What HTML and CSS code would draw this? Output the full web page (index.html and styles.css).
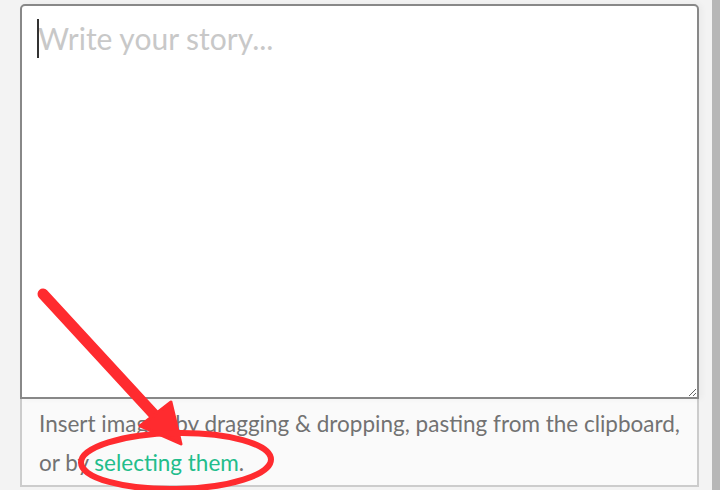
FILE: index.html
```html
<!DOCTYPE html>
<html lang="en">
<head>
    <meta charset="UTF-8">
    <title>Write your story</title>
    <link rel="stylesheet" href="styles.css">
</head>
<body>
    <div class="page">
        <div class="editor">
            <div class="field">
                <textarea class="story" placeholder="Write your story..."></textarea>
                <span class="caret"></span>
            </div>
            <div class="upload-hint">
                Insert images by dragging &amp; dropping, pasting from the clipboard, or by <a href="#" class="select-link">selecting them</a>.
            </div>
        </div>
        <div class="scroll-track"></div>
    </div>

    <svg class="annotation" width="720" height="490" viewBox="0 0 720 490">
        <line x1="43" y1="294" x2="160" y2="421" stroke="#ff2b2f" stroke-width="11" stroke-linecap="round"/>
        <polygon points="181,444 140,426 171,402" fill="#ff2b2f" stroke="#ff2b2f" stroke-width="3" stroke-linejoin="round"/>
        <ellipse cx="176" cy="461" rx="95" ry="28" fill="none" stroke="#ff2b2f" stroke-width="6" transform="rotate(-1 176 461)"/>
    </svg>
</body>
</html>
```

FILE: styles.css
```css
* {
    margin: 0;
    padding: 0;
    box-sizing: border-box;
}

body {
    font-family: "Lato", "Liberation Sans", sans-serif;
    background-color: #f3f3f3;
    overflow: hidden;
    height: 490px;
}

.page {
    display: flex;
    height: 100%;
}

.editor {
    width: 712px;
    padding: 4px 13px 0 20px;
}

.scroll-track {
    width: 8px;
    background-color: #b7b7b7;
}

.field {
    position: relative;
}

.story {
    display: block;
    width: 679px;
    height: 395px;
    padding: 14px 16px;
    border: 2px solid #888;
    border-radius: 5px 5px 0 0;
    background-color: #fff;
    font-family: inherit;
    font-size: 30px;
    color: #333;
    resize: vertical;
    outline: none;
    box-shadow: 3px 0 6px rgba(0, 0, 0, 0.04);
}

.story::placeholder {
    color: #c8c8c8;
}

.caret {
    position: absolute;
    left: 17px;
    top: 15px;
    width: 2px;
    height: 39px;
    background-color: #333;
}

.upload-hint {
    width: 679px;
    height: 88px;
    padding: 5px 14px 0 17px;
    border: 2px solid #ccc;
    border-top: none;
    background-color: #fafafa;
    color: #727272;
    font-size: 22.5px;
    line-height: 39px;
}

.select-link {
    color: #22bd8b;
    text-decoration: none;
}

.annotation {
    position: absolute;
    left: 0;
    top: 0;
    pointer-events: none;
}
```
